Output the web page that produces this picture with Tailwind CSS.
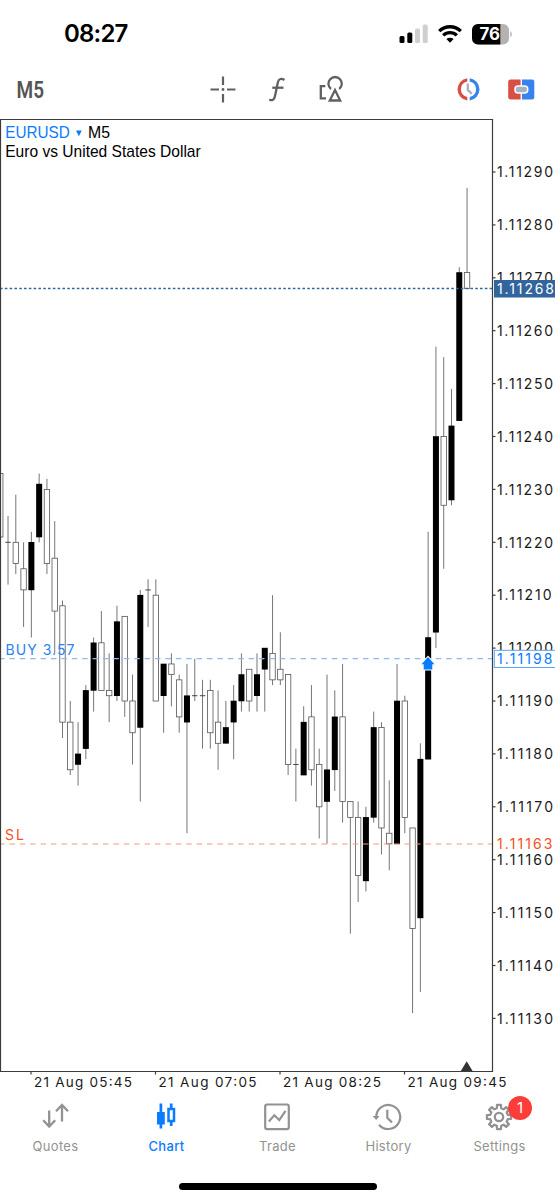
<!DOCTYPE html>
<html lang='en'>
<head>
  <meta charset='UTF-8'/>
  <meta name='viewport' content='width=device-width, initial-scale=1.0'/>
  <title>EURUSD M5</title>
  <script src="https://cdn.jsdelivr.net/npm/@tailwindcss/browser@4"></script>
</head>
<body class='bg-white overflow-hidden'>
  <div class="w-[555px] h-[1200px] flex flex-col bg-white text-black font-['Inter',sans-serif]">

    <!-- Status bar -->
    <div class='h-[66px] shrink-0 flex items-center justify-between pl-[64px] pr-[43px] pt-[2px]'>
      <div class='text-[24px] leading-none font-semibold tracking-[-0.8px] w-[80px]'>08:27</div>
      <div class='flex items-center gap-[10px]'>
        <svg class='w-[29px] h-[20px]' viewBox='0 0 29 20'>
          <rect x='0.5' y='12' width='5' height='7' rx='1.5' fill='#000'/>
          <rect x='8.3' y='8.5' width='5' height='10.5' rx='1.5' fill='#000'/>
          <rect x='16' y='4.5' width='5' height='14.5' rx='1.5' fill='#cfcfcf'/>
          <rect x='23.7' y='0.5' width='5' height='18.5' rx='1.5' fill='#cfcfcf'/>
        </svg>
        <svg class='w-[24px] h-[20px]' viewBox='0 0 24 20' fill='none' stroke='#000' stroke-width='3.3'>
          <path d='M1.2 7.2a15.3 15.3 0 0 1 21.6 0'/>
          <path d='M5.2 11.4a9.6 9.6 0 0 1 13.6 0'/>
          <path d='M12 18.8l-3.6-3.7a5.2 5.2 0 0 1 7.2 0z' fill='#000' stroke='none'/>
        </svg>
        <svg class='w-[40px] h-[21px]' viewBox='0 0 40 21'>
          <rect width='37' height='20.5' rx='6' fill='#b3b3b3'/>
          <path d='M6 0H28.3V20.5H6a6 6 0 0 1-6-6V6a6 6 0 0 1 6-6z' fill='#000'/>
          <path d='M38.3 7.2c2 1 2 5.2 0 6.2z' fill='#b3b3b3'/>
          <text x='7.5' y='16.3' font-size='17' font-weight='700' fill='#fff' textLength='20.5' lengthAdjust='spacingAndGlyphs'>76</text>
        </svg>
      </div>
    </div>

    <!-- Toolbar -->
    <div class='h-[53px] shrink-0 flex items-start pt-[8px]'>
      <svg class='w-[36px] h-[30px] ml-[14px]' viewBox='0 0 36 30'>
        <text x='2.5' y='23.5' font-family='Roboto' font-weight='600' font-size='23.5' fill='#555' textLength='27.5' lengthAdjust='spacingAndGlyphs'>M5</text>
      </svg>
      <svg class='w-[30px] h-[30px] ml-[158px]' viewBox='0 0 30 30' stroke='#606060' stroke-width='2.2' fill='none'>
        <path d='M15 2.5V11M15 20V28.5M2.500 15.500H11M19 15.500H27.500'/>
        <circle cx='15' cy='15.5' r='1.4' fill='#606060' stroke='none'/>
      </svg>
      <svg class='w-[24px] h-[30px] ml-[27px]' viewBox='0 0 24 30' fill='none' stroke='#606060' stroke-width='2.3'>
        <path d='M19.5 6C16.5 4 13.700 4.500 12.800 8.500L10 22C9.200 26 7.200 27.100 4.300 25.500'/>
        <path d='M7.300 13.700H18.500'/>
      </svg>
      <svg class='w-[30px] h-[30px] ml-[28px]' viewBox='0 0 30 30' fill='none' stroke='#606060' stroke-width='2.300'>
        <path d='M8.300 12.200H3.800V24.300H9'/>
        <path d='M14 15A6.700 6.700 0 1 1 22.200 15'/>
        <path d='M18 16L12.800 26.500H23.200Z'/>
      </svg>
      <svg class='w-[30px] h-[30px] ml-[106px]' viewBox='0 0 30 30'>
        <path d='M14.300 4.200V7.600A8.200 7.900 0 0 0 14.300 23V26.500A11.700 11.300 0 0 1 14.300 4.200Z' fill='#d84f45'/>
        <path d='M16.700 4.200A11.700 11.300 0 0 1 16.700 26.500V23A8.200 7.900 0 0 0 16.700 7.600Z' fill='#3682ee'/>
        <path d='M14.800 9.500V15.900L18.800 19.900' fill='none' stroke='#a6b2bd' stroke-width='2.300'/>
      </svg>
      <svg class='w-[30px] h-[30px] ml-[23px]' viewBox='0 0 30 30'>
        <path d='M4.500 5.500H14.600V25.500H4.500A2.300 2.300 0 0 1 2.200 23.200V7.800A2.300 2.300 0 0 1 4.500 5.500Z' fill='#d84f45'/>
        <path d='M16 5.500H26A2.300 2.300 0 0 1 28.300 7.800V23.200A2.300 2.300 0 0 1 26 25.500H16Z' fill='#3682ee'/>
        <rect x='9' y='11.900' width='12.700' height='7' rx='3' fill='#a6b2bd' stroke='#fff' stroke-width='1.500'/>
      </svg>
    </div>

    <!-- Chart -->
    <svg id='chart' class='block shrink-0 w-[555px] h-[976px]' viewBox='0 119 555 976'>
      <g id='candles'></g>
      <path d='M0 288.500H492' stroke='#31699f' stroke-width='1.400' stroke-dasharray='2.600 2.200'/>
      <path d='M0 658.700H492' stroke='#8db8f0' stroke-width='1.200' stroke-dasharray='5.500 4.900' stroke-dashoffset='1'/>
      <path d='M0 844H492' stroke='#f59a80' stroke-width='1.200' stroke-dasharray='5.500 4.900' stroke-dashoffset='1'/>
      <path d='M428 657L434.500 664.200H432.300V669.500H423.700V664.200H421.500Z' fill='#0a7cff' stroke='#fff' stroke-width='2' paint-order='stroke'/>
      <path d='M0.500 119.500H492.500V1071.500H0.500Z' fill='none' stroke='#3c3c3c' stroke-width='1.200'/>
      <path d='M460.800 1071L466.700 1061.300L472.600 1071Z' fill='#333'/>
      <g font-family='Liberation Sans' font-size='16.200'>
        <text x='5.200' y='138' fill='#0a7cff' textLength='64.500' lengthAdjust='spacingAndGlyphs'>EURUSD</text>
        <path d='M76 130.500H81.800L78.900 136.300Z' fill='#0a7cff'/>
        <text x='88' y='138' textLength='22' lengthAdjust='spacingAndGlyphs'>M5</text>
        <text x='5.200' y='157' textLength='195.500' lengthAdjust='spacingAndGlyphs'>Euro vs United States Dollar</text>
      </g>
      <g font-size='14'>
        <text x='5.500' y='655' fill='#2b84ee' textLength='69'>BUY 3.57</text>
        <text x='5' y='840' fill='#f4511e' textLength='19'>SL</text>
      </g>
      <g id='axis' font-size='14' fill='#1a1a1a' stroke-width='1.200'></g>
      <rect x='494' y='280' width='61' height='17.500' fill='#31659c'/>
      <text x='497' y='293.700' font-size='14' fill='#fff' textLength='57'>1.11268</text>
      <rect x='494.300' y='650.300' width='62' height='17.200' fill='#fff' stroke='#5aa4f5'/>
      <text x='497' y='663.900' font-size='14' fill='#0a7cff' textLength='55.500'>1.11198</text>
      <rect x='494' y='836' width='61' height='17' fill='#fff'/>
      <text x='497' y='849' font-size='14' fill='#f4511e' textLength='55.500'>1.11163</text>
    </svg>

    <!-- Tab bar -->
    <div class='flex h-[88px] shrink-0 text-[13px] leading-4 text-[#929292] tracking-[0.3px]'>
      <div class='w-[111px] flex flex-col items-center pt-[6px]'>
        <svg class='w-[32px] h-[32px] -ml-[2px]' viewBox='0 0 32 32' fill='none' stroke='currentColor' stroke-width='2.300'>
          <path d='M10.200 9.500V25M4.200 19.200L10.200 25.500L16.200 19.200M23 20.500V4.500M17 10.300L23 4L29 10.300'/>
        </svg>
        <div class='mt-[5px]'>Quotes</div>
      </div>
      <div class='w-[111px] flex flex-col items-center pt-[6px] text-[#0a7cff] font-medium'>
        <svg class='w-[32px] h-[32px] -ml-[2px]' viewBox='0 0 32 32' fill='none' stroke='currentColor'>
          <path d='M10.900 2.500V27.500M21.200 2.500V7M21.200 20.500V25' stroke-width='2.700'/>
          <rect x='7' y='11' width='7.800' height='12.500' fill='currentColor' stroke='none'/>
          <rect x='18.500' y='8' width='5.500' height='12' stroke-width='2.500'/>
        </svg>
        <div class='mt-[5px]'>Chart</div>
      </div>
      <div class='w-[111px] flex flex-col items-center pt-[6px]'>
        <svg class='w-[32px] h-[32px] -ml-[2px]' viewBox='0 0 32 32' fill='none' stroke='currentColor' stroke-width='2.200'>
          <rect x='4.200' y='3.500' width='23.600' height='24.600' rx='1.800'/>
          <path d='M7.800 20.500L13.300 14.300L18.300 19L24.500 9.800'/>
        </svg>
        <div class='mt-[5px]'>Trade</div>
      </div>
      <div class='w-[111px] flex flex-col items-center pt-[6px]'>
        <svg class='w-[32px] h-[32px] -ml-[3px]' viewBox='0 0 32 32' fill='none' stroke='currentColor' stroke-width='2.200'>
          <path d='M5.200 16A12 12 0 1 1 8 23.700'/>
          <path d='M1.500 15L8.500 15L5.200 19Z' fill='currentColor' stroke='none'/>
          <path d='M16.300 8.800V16.800L21 21.500'/>
        </svg>
        <div class='mt-[5px]'>History</div>
      </div>
      <div class='w-[111px] relative flex flex-col items-center pt-[6px]'>
        <svg class='w-[32px] h-[32px] -ml-[2px]' viewBox='0 0 32 32' fill='none' stroke='currentColor' stroke-width='2.300' stroke-linejoin='round'>
          <path id='gear'/>
          <circle cx='16' cy='16' r='4.200'/>
        </svg>
        <div class='mt-[5px]'>Settings</div>
        <div class='absolute left-[64px] top-[1px] w-[24px] h-[24px] rounded-full bg-[#fc3d39] text-white text-[15px] leading-6 text-center tracking-normal'>1</div>
      </div>
    </div>

    <!-- Home indicator -->
    <div class='flex justify-center'>
      <div class='w-[198px] h-[7px] rounded-full bg-black'></div>
    </div>
  </div>

  <script>
    // [open, high, low, close] in points above 1.11000, one entry per 5 minutes
    const CANDLES = [
      [233,233,221,221],[220,225,212,220],[220,229,214,216],[215,220,204,211],[211,222,202,220],
      [221,233,220,231],[230,232,214,216],[217,224,199,207],[208,209,183,186],[186,190,176,177],
      [178,186,174,180],[181,193,179,192],[192,202,188,201],[201,207,192,192],[192,199,186,191],
      [191,208,190,205],[206,206,187,190],[190,195,178,184],[185,211,171,210],[211,213,204,211],
      [210,213,190,190],[191,197,184,197],[197,199,189,195],[194,195,184,187],[186,197,165,191],
      [191,198,190,191],[191,194,181,191],[192,194,181,184],[186,192,177,182],[182,190,182,185],
      [186,193,179,190],[190,199,188,195],[196,196,188,190],[191,199,188,195],[196,200,188,200],
      [199,210,193,194],[196,203,193,194],[195,195,176,178],[178,181,171,178],[176,189,176,186],
      [187,193,174,177],[178,181,164,170],[171,195,163,177],[177,192,173,187],[187,197,167,171],
      [171,171,146,168],[168,171,152,157],[156,170,154,168],[168,188,167,185],[185,186,161,166],
      [165,175,158,163],[163,197,163,190],[190,191,165,168],[166,166,131,147],[149,182,135,179],
      [179,222,179,202],[203,257,200,240],[240,255,215,227],[228,249,227,242],[243,272,243,271],
      [271,287,268,268]
    ];
    const STEP = 7.78;
    const priceY = p => 172 + (290 - p) * 5.29;

    // Candles: black when rising, hollow when falling
    let out = '';
    CANDLES.forEach(([o, h, l, c], i) => {
      const x = 0.25 + i * STEP;
      const top = priceY(Math.max(o, c));
      const bottom = priceY(Math.min(o, c));
      out += `<path d="M${x} ${priceY(h)}V${priceY(l)}" stroke="#666" stroke-width="0.9"/>`;
      if (o === c) {
        out += `<path d="M${x - 2.7} ${top}H${x + 2.7}" stroke="#444" stroke-width="1"/>`;
      } else if (c > o) {
        out += `<rect x="${x - 3}" y="${top - 0.3}" width="6" height="${bottom - top + 0.6}" fill="#000"/>`;
      } else {
        out += `<rect x="${x - 2.7}" y="${top}" width="5.4" height="${bottom - top}" fill="#fff" stroke="#555" stroke-width="0.8"/>`;
      }
    });
    document.getElementById('candles').innerHTML = out;

    // Price and time axes
    let axis = '';
    for (let p = 290; p >= 130; p -= 10) {
      const y = priceY(p);
      axis += `<path d="M492 ${y}H495.500" stroke="#3c3c3c"/><text x="497" y="${y + 5.2}" textLength="${p === 210 ? 54.5 : 56}">1.11${p}</text>`;
    }
    ['05:45', '07:05', '08:25', '09:45'].forEach((t, i) => {
      const x = 31 + i * 124.5;
      axis += `<path d="M${x} 1071V1074.500" stroke="#3c3c3c"/><text x="${x + 3}" y="1087" font-size="13.500" textLength="${i === 3 ? 99 : 98}">21 Aug ${t}</text>`;
    });
    document.getElementById('axis').innerHTML = axis;

    // Settings gear outline, eight teeth
    const pts = [];
    for (let i = 0; i < 8; i++) {
      [[-14, 9], [-9, 12.2], [9, 12.2], [14, 9]].forEach(([d, r]) => {
        const a = (i * 45 + d - 90) * Math.PI / 180;
        pts.push((16 + r * Math.cos(a)).toFixed(2) + ' ' + (16 + r * Math.sin(a)).toFixed(2));
      });
    }
    document.getElementById('gear').setAttribute('d', 'M' + pts.join('L') + 'Z');
  </script>
</body>
</html>
